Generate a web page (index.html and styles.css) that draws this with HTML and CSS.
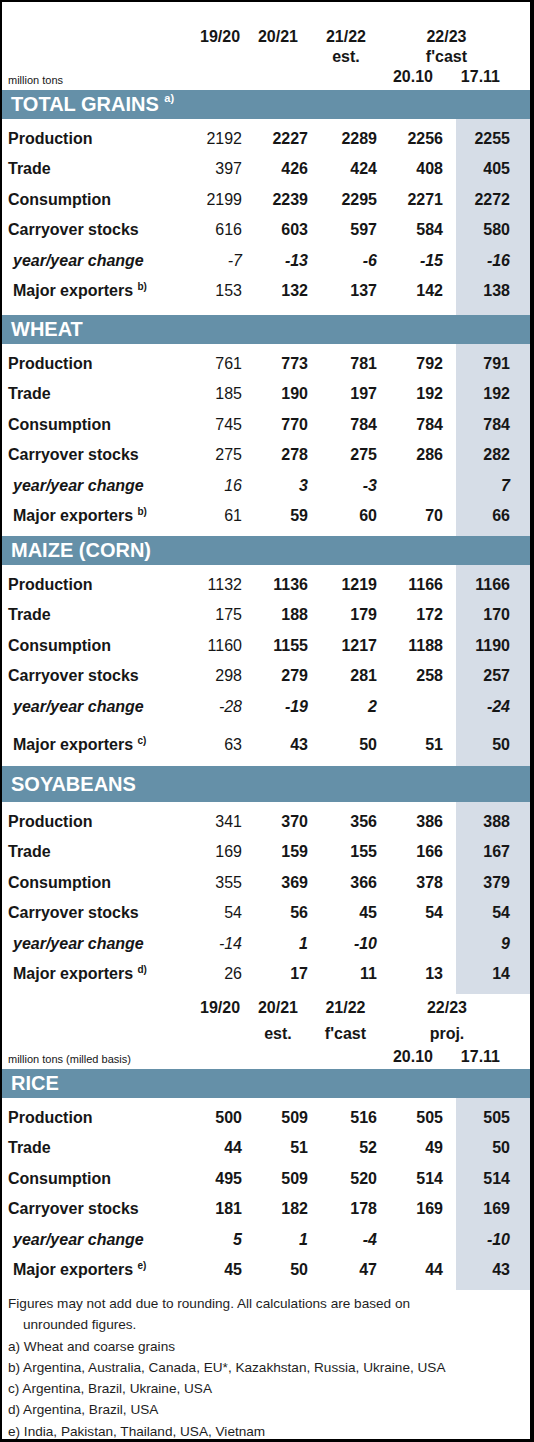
FILE: index.html
```html
<!DOCTYPE html>
<html lang="en">
<head>
    <meta charset="UTF-8">
    <meta name="viewport" content="width=device-width, initial-scale=1.0">
    <title>Grain Market Balance</title>
    <link rel="stylesheet" href="styles.css">
</head>
<body>
    <div class="sheet">
        <table class="balance">
            <colgroup>
                <col class="c-label">
                <col class="c-1">
                <col class="c-2">
                <col class="c-3">
                <col class="c-4">
                <col class="c-5">
            </colgroup>

            <!-- header: grains -->
            <tr class="head head-one">
                <th></th>
                <th class="h1"><span class="stack">19/20</span></th>
                <th class="h2"><span class="stack">20/21</span></th>
                <th class="h3"><span class="stack">21/22<br>est.</span></th>
                <th class="h45" colspan="2"><span class="stack">22/23<br>f'cast</span></th>
            </tr>
            <tr class="head-sub">
                <th class="unit">million tons</th>
                <th></th>
                <th></th>
                <th></th>
                <th class="h4">20.10</th>
                <th class="h5">17.11</th>
            </tr>

            <tr class="band"><th colspan="6">TOTAL GRAINS <sup>a)</sup></th></tr>
            <tr class="first">
                <td class="label">Production</td><td class="plain">2192</td><td>2227</td><td>2289</td><td>2256</td><td class="shade">2255</td>
            </tr>
            <tr>
                <td class="label">Trade</td><td class="plain">397</td><td>426</td><td>424</td><td>408</td><td class="shade">405</td>
            </tr>
            <tr>
                <td class="label">Consumption</td><td class="plain">2199</td><td>2239</td><td>2295</td><td>2271</td><td class="shade">2272</td>
            </tr>
            <tr>
                <td class="label">Carryover stocks</td><td class="plain">616</td><td>603</td><td>597</td><td>584</td><td class="shade">580</td>
            </tr>
            <tr class="change">
                <td class="label sub">year/year change</td><td class="plain">-7</td><td>-13</td><td>-6</td><td>-15</td><td class="shade">-16</td>
            </tr>
            <tr class="last last-tg">
                <td class="label sub">Major exporters <sup>b)</sup></td><td class="plain">153</td><td>132</td><td>137</td><td>142</td><td class="shade">138</td>
            </tr>

            <tr class="band"><th colspan="6">WHEAT</th></tr>
            <tr class="first">
                <td class="label">Production</td><td class="plain">761</td><td>773</td><td>781</td><td>792</td><td class="shade">791</td>
            </tr>
            <tr>
                <td class="label">Trade</td><td class="plain">185</td><td>190</td><td>197</td><td>192</td><td class="shade">192</td>
            </tr>
            <tr>
                <td class="label">Consumption</td><td class="plain">745</td><td>770</td><td>784</td><td>784</td><td class="shade">784</td>
            </tr>
            <tr>
                <td class="label">Carryover stocks</td><td class="plain">275</td><td>278</td><td>275</td><td>286</td><td class="shade">282</td>
            </tr>
            <tr class="change">
                <td class="label sub">year/year change</td><td class="plain">16</td><td>3</td><td>-3</td><td></td><td class="shade">7</td>
            </tr>
            <tr class="last">
                <td class="label sub">Major exporters <sup>b)</sup></td><td class="plain">61</td><td>59</td><td>60</td><td>70</td><td class="shade">66</td>
            </tr>

            <tr class="band"><th colspan="6">MAIZE (CORN)</th></tr>
            <tr class="first">
                <td class="label">Production</td><td class="plain">1132</td><td>1136</td><td>1219</td><td>1166</td><td class="shade">1166</td>
            </tr>
            <tr>
                <td class="label">Trade</td><td class="plain">175</td><td>188</td><td>179</td><td>172</td><td class="shade">170</td>
            </tr>
            <tr>
                <td class="label">Consumption</td><td class="plain">1160</td><td>1155</td><td>1217</td><td>1188</td><td class="shade">1190</td>
            </tr>
            <tr>
                <td class="label">Carryover stocks</td><td class="plain">298</td><td>279</td><td>281</td><td>258</td><td class="shade">257</td>
            </tr>
            <tr class="change">
                <td class="label sub">year/year change</td><td class="plain">-28</td><td>-19</td><td>2</td><td></td><td class="shade">-24</td>
            </tr>
            <tr class="last last-maize">
                <td class="label sub">Major exporters <sup>c)</sup></td><td class="plain">63</td><td>43</td><td>50</td><td>51</td><td class="shade">50</td>
            </tr>

            <tr class="band band-tall"><th colspan="6">SOYABEANS</th></tr>
            <tr class="first">
                <td class="label">Production</td><td class="plain">341</td><td>370</td><td>356</td><td>386</td><td class="shade">388</td>
            </tr>
            <tr>
                <td class="label">Trade</td><td class="plain">169</td><td>159</td><td>155</td><td>166</td><td class="shade">167</td>
            </tr>
            <tr>
                <td class="label">Consumption</td><td class="plain">355</td><td>369</td><td>366</td><td>378</td><td class="shade">379</td>
            </tr>
            <tr>
                <td class="label">Carryover stocks</td><td class="plain">54</td><td>56</td><td>45</td><td>54</td><td class="shade">54</td>
            </tr>
            <tr class="change">
                <td class="label sub">year/year change</td><td class="plain">-14</td><td>1</td><td>-10</td><td></td><td class="shade">9</td>
            </tr>
            <tr class="last">
                <td class="label sub">Major exporters <sup>d)</sup></td><td class="plain">26</td><td>17</td><td>11</td><td>13</td><td class="shade">14</td>
            </tr>

            <!-- header: rice -->
            <tr class="head head-two">
                <th></th>
                <th class="h1"><span class="stack">19/20</span></th>
                <th class="h2"><span class="stack">20/21<br>est.</span></th>
                <th class="h3"><span class="stack">21/22<br>f'cast</span></th>
                <th class="h45" colspan="2"><span class="stack">22/23<br>proj.</span></th>
            </tr>
            <tr class="head-sub head-sub-two">
                <th class="unit">million tons (milled basis)</th>
                <th></th>
                <th></th>
                <th></th>
                <th class="h4">20.10</th>
                <th class="h5">17.11</th>
            </tr>

            <tr class="band"><th colspan="6">RICE</th></tr>
            <tr class="first">
                <td class="label">Production</td><td>500</td><td>509</td><td>516</td><td>505</td><td class="shade">505</td>
            </tr>
            <tr>
                <td class="label">Trade</td><td>44</td><td>51</td><td>52</td><td>49</td><td class="shade">50</td>
            </tr>
            <tr>
                <td class="label">Consumption</td><td>495</td><td>509</td><td>520</td><td>514</td><td class="shade">514</td>
            </tr>
            <tr>
                <td class="label">Carryover stocks</td><td>181</td><td>182</td><td>178</td><td>169</td><td class="shade">169</td>
            </tr>
            <tr class="change">
                <td class="label sub">year/year change</td><td>5</td><td>1</td><td>-4</td><td></td><td class="shade">-10</td>
            </tr>
            <tr class="last">
                <td class="label sub">Major exporters <sup>e)</sup></td><td>45</td><td>50</td><td>47</td><td>44</td><td class="shade">43</td>
            </tr>
        </table>

        <div class="notes">
            <p class="hang">Figures may not add due to rounding. All calculations are based on<br>unrounded figures.</p>
            <p>a) Wheat and coarse grains</p>
            <p>b) Argentina, Australia, Canada, EU*, Kazakhstan, Russia, Ukraine, USA</p>
            <p>c) Argentina, Brazil, Ukraine, USA</p>
            <p>d) Argentina, Brazil, USA</p>
            <p>e) India, Pakistan, Thailand, USA, Vietnam</p>
        </div>
    </div>
</body>
</html>
```

FILE: styles.css
```css
* {
    margin: 0;
    padding: 0;
    box-sizing: border-box;
}

body {
    font-family: 'Liberation Sans', Arial, sans-serif;
    background: #ffffff;
    color: #161616;
}

.sheet {
    width: 534px;
    height: 1442px;
    border-style: solid;
    border-color: #000000;
    border-width: 2px 4px 3px 2px;
    background: #ffffff;
    overflow: hidden;
}

.balance {
    width: 528px;
    table-layout: fixed;
    border-collapse: collapse;
    border-spacing: 0;
}

.c-label { width: 198px; }
.c-1 { width: 50px; }
.c-2 { width: 66px; }
.c-3 { width: 69px; }
.c-4 { width: 71px; }
.c-5 { width: 74px; }

/* column headers */
.head th {
    font-size: 16px;
    font-weight: 700;
    text-align: right;
    vertical-align: top;
    line-height: 20px;
}

.head-one th {
    padding-top: 25px;
}

.head-two th {
    padding-top: 1px;
    line-height: 26px;
}

.stack {
    display: inline-block;
    text-align: center;
}

.head .h1 { padding-right: 18px; }
.head .h2 { padding-right: 18px; }
.head .h3 { padding-right: 19px; }
.head .h45 { padding-right: 63px; }

.head-sub th {
    font-size: 16px;
    font-weight: 700;
    text-align: right;
    line-height: 19px;
    height: 23px;
    padding-bottom: 4px;
    vertical-align: bottom;
}

.head-sub-two th {
    height: 22px;
    padding-bottom: 2px;
    line-height: 20px;
}

.head-sub .h4 { padding-right: 23px; }
.head-sub .h5 { padding-right: 30px; }

.head-sub .unit {
    font-size: 11px;
    font-weight: 400;
    text-align: left;
    padding-left: 6px;
    line-height: 13px;
    padding-bottom: 3px;
    white-space: nowrap;
}

/* section bands */
.band th {
    background: #6590a8;
    color: #ffffff;
    font-size: 20px;
    font-weight: 700;
    text-align: left;
    padding-left: 9px;
    height: 29px;
    line-height: 29px;
}

.band-tall th {
    height: 36px;
}

.band sup {
    font-size: 11px;
    vertical-align: 9px;
    line-height: 0;
}

/* data rows */
td {
    font-size: 16px;
    font-weight: 700;
    text-align: right;
    height: 30.5px;
    line-height: 19px;
    vertical-align: middle;
    white-space: nowrap;
}

td:nth-child(2),
td:nth-child(3),
td:nth-child(4) {
    padding-right: 8px;
}

td:nth-child(5) {
    padding-right: 13px;
}

td.shade {
    background: #d6dde7;
    padding-right: 20px;
}

td.label {
    text-align: left;
    padding-left: 6px;
}

td.sub {
    padding-left: 11px;
}

td.plain {
    font-weight: 400;
}

td sup {
    font-size: 10px;
    vertical-align: 6px;
    line-height: 0;
}

.change td {
    font-style: italic;
}

.first td {
    height: 34.5px;
    padding-top: 4px;
}

.last td {
    height: 35.5px;
    padding-bottom: 5px;
}

.last-tg td {
    height: 39.5px;
    padding-bottom: 9px;
}

.last-maize td {
    height: 44.5px;
    padding-bottom: 4px;
    padding-top: 6px;
}

/* footnotes */
.notes {
    padding: 3px 0 0 6px;
    font-size: 13.6px;
    line-height: 21.3px;
    color: #1e1e1e;
}

.notes .hang {
    padding-left: 15px;
    text-indent: -15px;
}
```
